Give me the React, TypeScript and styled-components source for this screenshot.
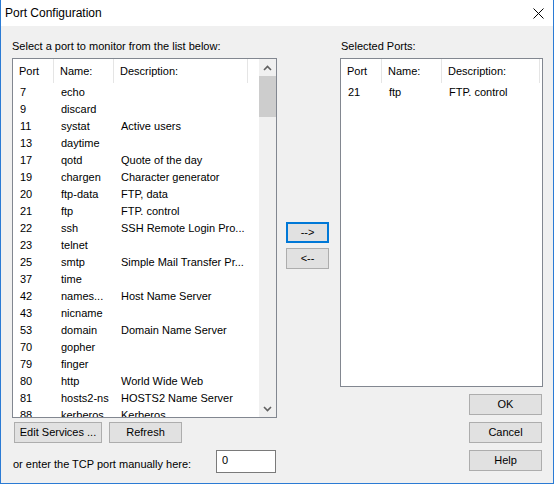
import React from "react";
import styled, { createGlobalStyle } from "styled-components";

type Port = {
    port: string;
    name: string;
    description?: string;
};

const availablePorts: Port[] = [
    { port: "7", name: "echo" },
    { port: "9", name: "discard" },
    { port: "11", name: "systat", description: "Active users" },
    { port: "13", name: "daytime" },
    { port: "17", name: "qotd", description: "Quote of the day" },
    { port: "19", name: "chargen", description: "Character generator" },
    { port: "20", name: "ftp-data", description: "FTP, data" },
    { port: "21", name: "ftp", description: "FTP. control" },
    { port: "22", name: "ssh", description: "SSH Remote Login Pro..." },
    { port: "23", name: "telnet" },
    { port: "25", name: "smtp", description: "Simple Mail Transfer Pr..." },
    { port: "37", name: "time" },
    { port: "42", name: "names...", description: "Host Name Server" },
    { port: "43", name: "nicname" },
    { port: "53", name: "domain", description: "Domain Name Server" },
    { port: "70", name: "gopher" },
    { port: "79", name: "finger" },
    { port: "80", name: "http", description: "World Wide Web" },
    { port: "81", name: "hosts2-ns", description: "HOSTS2 Name Server" },
    { port: "88", name: "kerberos", description: "Kerberos" },
];

const selectedPorts: Port[] = [{ port: "21", name: "ftp", description: "FTP. control" }];

const GlobalStyle = createGlobalStyle`
    html, body {
        margin: 0;
        padding: 0;
        background: #ffffff;
    }
    * {
        box-sizing: border-box;
    }
`;

type PortListProps = {
    ports: Port[];
    height: number;
    descWidth: number;
    scroll?: boolean;
};

const PortList: React.FC<PortListProps> = ({ ports, height, descWidth, scroll }) => {
    return (
        <ListBox style={{ height }}>
            <ListContent>
                <HeaderRow>
                    <HeaderCell $width={41}>Port</HeaderCell>
                    <HeaderCell $width={60}>Name:</HeaderCell>
                    <HeaderCell $width={descWidth}>Description:</HeaderCell>
                </HeaderRow>
                {ports.map((p) => (
                    <Row key={p.port}>
                        <Cell $width={41}>{p.port}</Cell>
                        <Cell $width={60}>{p.name}</Cell>
                        <Cell $width={descWidth}>{p.description}</Cell>
                    </Row>
                ))}
            </ListContent>
            {scroll && (
                <ScrollBar>
                    <ScrollArrow>
                        <svg width="9" height="6" viewBox="0 0 9 6">
                            <path d="M1 5 L4.5 1.5 L8 5" fill="none" stroke="#606060" strokeWidth="1.6" />
                        </svg>
                    </ScrollArrow>
                    <Thumb />
                    <Track />
                    <ScrollArrow>
                        <svg width="9" height="6" viewBox="0 0 9 6">
                            <path d="M1 1 L4.5 4.5 L8 1" fill="none" stroke="#606060" strokeWidth="1.6" />
                        </svg>
                    </ScrollArrow>
                </ScrollBar>
            )}
        </ListBox>
    );
};

const App: React.FC = () => {
    return (
        <>
            <GlobalStyle />
            <Dialog>
                <TitleBar>
                    <Title>Port Configuration</Title>
                    <CloseIcon width="11" height="11" viewBox="0 0 11 11">
                        <path d="M0.5 0.5 L10.5 10.5 M10.5 0.5 L0.5 10.5" stroke="#000" strokeWidth="1" />
                    </CloseIcon>
                </TitleBar>

                <Body>
                    <LeftColumn>
                        <Label>Select a port to monitor from the list below:</Label>
                        <PortList ports={availablePorts} height={360} descWidth={134} scroll />
                        <ButtonRow>
                            <Button $width={88}>Edit Services ...</Button>
                            <Button $width={73}>Refresh</Button>
                        </ButtonRow>
                        <ManualRow>
                            <ManualLabel>or enter the TCP port manually here:</ManualLabel>
                            <PortInput defaultValue="0" />
                        </ManualRow>
                    </LeftColumn>

                    <MiddleColumn>
                        <Button $width={43} $default>--&gt;</Button>
                        <Button $width={43}>&lt;--</Button>
                    </MiddleColumn>

                    <RightColumn>
                        <Label $indent={1}>Selected Ports:</Label>
                        <PortList ports={selectedPorts} height={329} descWidth={98} />
                        <DialogButtons>
                            <Button $width={73}>OK</Button>
                            <Button $width={73}>Cancel</Button>
                            <Button $width={73}>Help</Button>
                        </DialogButtons>
                    </RightColumn>
                </Body>
            </Dialog>
        </>
    );
};

const Dialog = styled.div`
    width: 554px;
    height: 484px;
    background: #f0f0f0;
    border: 1px solid #2b7bd4;
    border-top: none;
    display: flex;
    flex-direction: column;
    font-family: "Liberation Sans", Arial, sans-serif;
    font-size: 11px;
    color: #000;
`;

const TitleBar = styled.div`
    height: 26px;
    background: #ffffff;
    display: flex;
    align-items: center;
    justify-content: space-between;
    padding: 0 9px 0 4px;
`;

const Title = styled.div`
    font-size: 12px;
    line-height: 14px;
`;

const CloseIcon = styled.svg`
    display: block;
    margin-top: 1px;
`;

const Body = styled.div`
    flex: 1;
    display: flex;
    padding: 14px 10px 0 11px;
`;

const LeftColumn = styled.div`
    width: 265px;
    display: flex;
    flex-direction: column;
`;

const MiddleColumn = styled.div`
    width: 63px;
    display: flex;
    flex-direction: column;
    gap: 5px;
    padding: 182px 0 0 9px;
`;

const RightColumn = styled.div`
    width: 203px;
    display: flex;
    flex-direction: column;
`;

const Label = styled.div<{ $indent?: number }>`
    height: 13px;
    line-height: 13px;
    margin-bottom: 5px;
    padding-left: ${(p) => p.$indent ?? 0}px;
    white-space: nowrap;
`;

const ListBox = styled.div`
    background: #ffffff;
    border: 1px solid #828790;
    display: flex;
    overflow: hidden;
`;

const ListContent = styled.div`
    flex: 1;
    overflow: hidden;
`;

const HeaderRow = styled.div`
    display: flex;
    height: 24px;
`;

const HeaderCell = styled.div<{ $width: number }>`
    width: ${(p) => p.$width}px;
    flex-shrink: 0;
    border-right: 1px solid #e5e5e5;
    padding-left: 6px;
    line-height: 24px;
    white-space: nowrap;
    overflow: hidden;
`;

const Row = styled.div`
    display: flex;
    height: 17px;
    padding-top: 1px;
    line-height: 16px;
`;

const Cell = styled.div<{ $width: number }>`
    width: ${(p) => p.$width}px;
    flex-shrink: 0;
    padding-left: 7px;
    white-space: nowrap;
    overflow: hidden;
`;

const ScrollBar = styled.div`
    width: 17px;
    background: #f0f0f0;
    display: flex;
    flex-direction: column;
`;

const ScrollArrow = styled.div`
    height: 17px;
    display: flex;
    align-items: center;
    justify-content: center;
`;

const Thumb = styled.div`
    height: 41px;
    background: #cdcdcd;
`;

const Track = styled.div`
    flex: 1;
`;

const Button = styled.button<{ $width: number; $default?: boolean }>`
    width: ${(p) => p.$width}px;
    height: 21px;
    padding: 0;
    background: #e1e1e1;
    border: ${(p) => (p.$default ? "2px solid #0078d7" : "1px solid #adadad")};
    font-family: "Liberation Sans", Arial, sans-serif;
    font-size: 11px;
    font-weight: normal;
    color: #000;
    line-height: 1;
`;

const ButtonRow = styled.div`
    display: flex;
    gap: 7px;
    margin: 4px 0 0 2px;
`;

const ManualRow = styled.div`
    display: flex;
    align-items: flex-start;
    justify-content: space-between;
    margin-top: 7px;
    padding: 0 1px 0 1px;
`;

const ManualLabel = styled.div`
    line-height: 13px;
    margin-top: 8px;
    white-space: nowrap;
`;

const PortInput = styled.input`
    width: 60px;
    height: 23px;
    border: 1px solid #7a7a7a;
    background: #ffffff;
    padding: 0 0 4px 5px;
    font-family: "Liberation Sans", Arial, sans-serif;
    font-size: 11px;
    outline: none;
`;

const DialogButtons = styled.div`
    display: flex;
    flex-direction: column;
    align-items: flex-end;
    gap: 7px;
    margin: 7px 1px 0 0;
`;

export default App;
